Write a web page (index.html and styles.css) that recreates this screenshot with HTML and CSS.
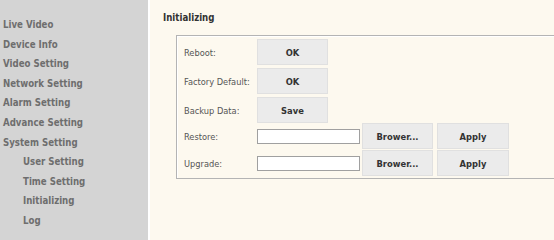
FILE: index.html
```html
<!DOCTYPE html>
<html lang="en">
<head>
    <meta charset="UTF-8">
    <title>Initializing</title>
    <link rel="stylesheet" href="styles.css">
</head>
<body>
    <div class="menu">
        <a class="item">Live Video</a>
        <a class="item">Device Info</a>
        <a class="item">Video Setting</a>
        <a class="item">Network Setting</a>
        <a class="item">Alarm Setting</a>
        <a class="item">Advance Setting</a>
        <a class="item">System Setting</a>
        <a class="item sub">User Setting</a>
        <a class="item sub">Time Setting</a>
        <a class="item sub">Initializing</a>
        <a class="item sub">Log</a>
    </div>

    <div class="main">
        <h2>Initializing</h2>
        <div class="panel">
            <div class="row">
                <span class="label">Reboot:</span>
                <button class="btn">OK</button>
            </div>
            <div class="row">
                <span class="label">Factory Default:</span>
                <button class="btn">OK</button>
            </div>
            <div class="row last">
                <span class="label">Backup Data:</span>
                <button class="btn">Save</button>
            </div>
            <div class="row file-row">
                <span class="label">Restore:</span>
                <input type="text" class="file">
                <button class="btn browse">Brower...</button>
                <button class="btn apply">Apply</button>
            </div>
            <div class="row file-row">
                <span class="label">Upgrade:</span>
                <input type="text" class="file">
                <button class="btn browse">Brower...</button>
                <button class="btn apply">Apply</button>
            </div>
        </div>
    </div>
</body>
</html>
```

FILE: styles.css
```css
body {
    margin: 0;
    display: flex;
    height: 240px;
    overflow: hidden;
    font-family: "DejaVu Sans Condensed", "DejaVu Sans", sans-serif;
    background-color: #fdf9ef;
}
.menu {
    width: 148px;
    flex-shrink: 0;
    background-color: #d4d4d4;
    border-right: 2px solid #ffffff;
    padding-top: 17px;
    display: flex;
    flex-direction: column;
}
.item {
    display: block;
    height: 19.6px;
    line-height: 15px;
    padding-left: 3px;
    font-size: 9.6px;
    font-weight: bold;
    color: #6e6e6e;
}
.item.sub {
    padding-left: 23px;
}
.main {
    flex: 1;
    padding: 11px 0 0 13px;
    overflow: hidden;
}
h2 {
    margin: 0;
    font-size: 9.6px;
    line-height: 14px;
    color: #333;
}
.panel {
    margin: 10px 0 0 13px;
    width: 400px;
    border: 1px solid #b4b4b4;
    border-right: none;
    padding: 3px 0 1px 7px;
    box-shadow: inset 1px 1px 0 #ffffff;
}
.row {
    display: flex;
    align-items: center;
    height: 26px;
    margin-bottom: 3px;
}
.row.last {
    margin-bottom: 0;
}
.row.file-row {
    margin-bottom: 1px;
}
.label {
    width: 73px;
    font-size: 9.2px;
    color: #555;
}
.btn {
    width: 71px;
    height: 26px;
    padding: 0;
    background-color: #ebebeb;
    border: 1px solid #e0e0e0;
    font-family: inherit;
    font-size: 9.3px;
    font-weight: bold;
    color: #333;
}
.file {
    width: 103px;
    height: 15px;
    box-sizing: border-box;
    margin: 0 2px 0 0;
    padding: 0;
    border: 1px solid #a0a0a0;
    background: #fff;
}
.browse {
    margin-right: 4px;
}
.apply {
    width: 72px;
}
```
